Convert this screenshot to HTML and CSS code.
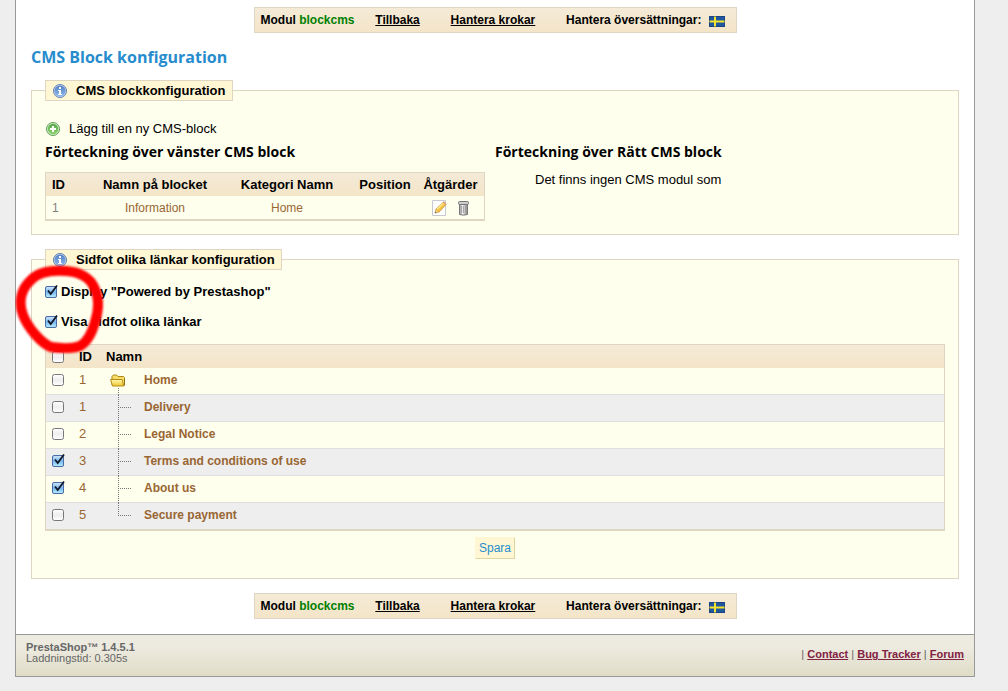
FILE: index.html
```html
<!DOCTYPE html>
<html lang="sv">
<head>
    <meta charset="UTF-8">
    <meta name="viewport" content="width=device-width, initial-scale=1.0">
    <title>PrestaShop - blockcms</title>
    <link rel="stylesheet" href="styles.css">
</head>
<body>
    <!-- Shared icons -->
    <svg class="sprite" aria-hidden="true">
        <defs>
            <linearGradient id="blue" x1="0" y1="0" x2="0" y2="1">
                <stop offset="0" stop-color="#5580c4"/>
                <stop offset="1" stop-color="#8cb8ea"/>
            </linearGradient>
            <linearGradient id="green" x1="0" y1="0" x2="0" y2="1">
                <stop offset="0" stop-color="#54a84c"/>
                <stop offset="1" stop-color="#8fd46c"/>
            </linearGradient>
            <linearGradient id="yellow" x1="0" y1="0" x2="0" y2="1">
                <stop offset="0" stop-color="#fffbb0"/>
                <stop offset="1" stop-color="#f0c52c"/>
            </linearGradient>
            <linearGradient id="metal">
                <stop offset="0" stop-color="#999"/>
                <stop offset=".4" stop-color="#eee"/>
                <stop offset="1" stop-color="#888"/>
            </linearGradient>
        </defs>
        <symbol id="icon-info" viewBox="0 0 16 16">
            <circle cx="8" cy="8" r="6.5" fill="#d5e1f2" stroke="#5d7fb5"/>
            <circle cx="8" cy="8" r="5.6" fill="url(#blue)"/>
            <path d="M7 4h2v2H7zM6 7h3v4h1v1H6v-1h1V8H6z" fill="#fff"/>
        </symbol>
        <symbol id="icon-add" viewBox="0 0 16 16">
            <circle cx="8" cy="8" r="6.5" fill="#d4edcb" stroke="#5d9f55"/>
            <circle cx="8" cy="8" r="5.2" fill="url(#green)"/>
            <path d="M7 5h2v2h2v2H9v2H7V9H5V7h2z" fill="#fff"/>
        </symbol>
        <symbol id="icon-edit" viewBox="0 0 16 16">
            <path d="M1.5 .5h13v15h-13z" fill="#fff" stroke="#c6c9d2"/>
            <path d="M4 13l1-4 7.500-7 2.500 2.500L8 12z" fill="#f7c545" stroke="#c28a30" stroke-width=".8"/>
            <path d="M6 9l6-5.500" stroke="#ffeb9a" stroke-width="1.300"/>
            <path d="M12 2.200l1-1 2.500 2.500-1 1z" fill="#dca089"/>
            <path d="M4 13l.8-3 2.200 2.200z" fill="#eed7a9"/>
            <path d="M4 13l.4-1.500 1.100 1.100z" fill="#333"/>
        </symbol>
        <symbol id="icon-delete" viewBox="0 0 16 16">
            <path d="M4.500 4h8v10.500q-4 1.300-8 0z" fill="url(#metal)" stroke="#777"/>
            <path d="M6.500 6v7M8.500 6v7M10.500 6v7" stroke="#999" stroke-width=".8"/>
            <rect x="3.500" y="1.500" width="10" height="3" rx="1" fill="#ccc" stroke="#777"/>
        </symbol>
        <symbol id="icon-flag" viewBox="0 0 16 11">
            <path d="M0 0h16v11H0z" fill="#21579c"/>
            <path d="M5 0h2v11H5zM0 4.500h16v2H0z" fill="#f5e52f"/>
            <path d="M.5 .5h15v10H.5z" fill="none" stroke="#143467" stroke-opacity=".5"/>
        </symbol>
        <symbol id="icon-folder" viewBox="0 0 16 13">
            <path d="M2 11V2.500L3.500 1h3L8 2.500h5.500l1 1V11z" fill="#f7dc67" stroke="#ad8513"/>
            <path d="M.6 5.500h11.500l1.500 6.500H2.500z" fill="url(#yellow)" stroke="#b58b16"/>
            <path d="M14.500 5v6.500" stroke="#8f6c10"/>
        </symbol>
        <symbol id="branch" viewBox="0 0 26 27">
            <path d="M12.500 0v27M14 12.500h12" fill="none" stroke="#777" stroke-dasharray="1 1"/>
        </symbol>
        <symbol id="branch-last" viewBox="0 0 26 27">
            <path d="M12.500 0v13M14 12.500h12" fill="none" stroke="#777" stroke-dasharray="1 1"/>
        </symbol>
    </svg>

    <div id="container">
        <div id="content">
            <nav class="toolbar">
                <span>Modul <span class="module">blockcms</span></span>
                <a href="#">Tillbaka</a>
                <a href="#">Hantera krokar</a>
                <span class="languages">Hantera översättningar:
                    <a href="#" aria-label="Svenska"><svg class="flag"><use href="#icon-flag"/></svg></a>
                </span>
            </nav>

            <h2>CMS Block konfiguration</h2>

            <fieldset class="blocks">
                <legend><svg class="icon"><use href="#icon-info"/></svg>CMS blockkonfiguration</legend>
                <a class="add" href="#"><svg class="icon"><use href="#icon-add"/></svg>Lägg till en ny CMS-block</a>
                <div class="columns">
                    <div>
                        <h3>Förteckning över vänster CMS block</h3>
                        <table class="table block-table">
                            <thead>
                                <tr>
                                    <th class="id">ID</th>
                                    <th class="wide">Namn på blocket</th>
                                    <th class="wide">Kategori Namn</th>
                                    <th class="position">Position</th>
                                    <th class="actions">Åtgärder</th>
                                </tr>
                            </thead>
                            <tbody>
                                <tr>
                                    <td class="id">1</td>
                                    <td>Information</td>
                                    <td>Home</td>
                                    <td></td>
                                    <td>
                                        <div class="buttons">
                                            <a href="#" aria-label="Redigera"><svg class="icon"><use href="#icon-edit"/></svg></a>
                                            <a href="#" aria-label="Radera"><svg class="icon"><use href="#icon-delete"/></svg></a>
                                        </div>
                                    </td>
                                </tr>
                            </tbody>
                        </table>
                    </div>
                    <div>
                        <h3>Förteckning över Rätt CMS block</h3>
                        <p class="empty">Det finns ingen CMS modul som</p>
                    </div>
                </div>
            </fieldset>

            <fieldset class="footer-links">
                <legend><svg class="icon"><use href="#icon-info"/></svg>Sidfot olika länkar konfiguration</legend>
                <div class="options">
                    <label><input type="checkbox" checked>Display "Powered by Prestashop"</label>
                    <label><input type="checkbox" checked>Visa sidfot olika länkar</label>
                    <svg class="marker" viewBox="0 0 100 100" aria-hidden="true">
                        <path d="M22 24C30 15 43 14 57 15C71 16 81 22 85 31C90 41 90 54 86 66C83 77 78 86 71 90C63 93 49 92 42 91C32 87 19 72 14 59C9 46 12 33 22 24Z"/>
                    </svg>
                </div>
                <table class="table page-table">
                    <thead>
                        <tr>
                            <th class="check"><input type="checkbox" aria-label="Markera alla"></th>
                            <th class="id">ID</th>
                            <th>Namn</th>
                        </tr>
                    </thead>
                    <tbody>
                        <tr>
                            <td><input type="checkbox" id="cat1"></td>
                            <td>1</td>
                            <td><label class="page" for="cat1"><svg class="tree" viewBox="0 0 26 27"><use href="#icon-folder" x="4" y="6" width="16" height="13"/><path d="M12.500 20v7" stroke="#777" stroke-dasharray="1 1"/></svg>Home</label></td>
                        </tr>
                        <tr>
                            <td><input type="checkbox" id="page1"></td>
                            <td>1</td>
                            <td><label class="page" for="page1"><svg class="tree"><use href="#branch"/></svg>Delivery</label></td>
                        </tr>
                        <tr>
                            <td><input type="checkbox" id="page2"></td>
                            <td>2</td>
                            <td><label class="page" for="page2"><svg class="tree"><use href="#branch"/></svg>Legal Notice</label></td>
                        </tr>
                        <tr>
                            <td><input type="checkbox" id="page3" checked></td>
                            <td>3</td>
                            <td><label class="page" for="page3"><svg class="tree"><use href="#branch"/></svg>Terms and conditions of use</label></td>
                        </tr>
                        <tr>
                            <td><input type="checkbox" id="page4" checked></td>
                            <td>4</td>
                            <td><label class="page" for="page4"><svg class="tree"><use href="#branch"/></svg>About us</label></td>
                        </tr>
                        <tr>
                            <td><input type="checkbox" id="page5"></td>
                            <td>5</td>
                            <td><label class="page" for="page5"><svg class="tree"><use href="#branch-last"/></svg>Secure payment</label></td>
                        </tr>
                    </tbody>
                </table>
                <button class="save" type="submit">Spara</button>
            </fieldset>

            <nav class="toolbar">
                <span>Modul <span class="module">blockcms</span></span>
                <a href="#">Tillbaka</a>
                <a href="#">Hantera krokar</a>
                <span class="languages">Hantera översättningar:
                    <a href="#" aria-label="Svenska"><svg class="flag"><use href="#icon-flag"/></svg></a>
                </span>
            </nav>
        </div>

        <footer>
            <div class="version"><strong>PrestaShop™ 1.4.5.1</strong><br>Laddningstid: 0.305s</div>
            <div class="links">| <a href="#">Contact</a> | <a href="#">Bug Tracker</a> | <a href="#">Forum</a></div>
        </footer>
    </div>
</body>
</html>
```
FILE: styles.css
```css
* {
    box-sizing: border-box;
}
body {
    margin: 0 33px 15px 15px;
    background: #eee;
    color: #000;
    font-family: Arial, "Liberation Sans", sans-serif;
    font-size: 13px;
    line-height: 16px;
}
.sprite {
    position: absolute;
    width: 0;
    height: 0;
}
.icon {
    display: block;
    flex: none;
    width: 16px;
    height: 16px;
}
#container {
    background: #fff;
    border: 1px solid #999;
    border-top: 0;
}
#content {
    padding: 7px 15px 15px;
}

/* Module toolbar */
.toolbar {
    display: flex;
    justify-content: space-between;
    align-items: center;
    width: 483px;
    max-width: 100%;
    height: 26px;
    margin: 0 auto;
    padding: 0 10px 0 6px;
    border: 1px solid #dfd5c3;
    background: linear-gradient(#f4ead7, #f4e5c8);
    font-size: 12px;
    font-weight: bold;
}
.toolbar a {
    color: #000;
}
.toolbar > a {
    margin-right: 10px;
}
.toolbar .module {
    color: #008000;
}
.languages {
    display: flex;
    align-items: center;
    gap: 8px;
}
.flag {
    display: block;
    width: 16px;
    height: 11px;
    margin-top: 2px;
}

h2, h3 {
    font-family: "Trebuchet MS", "Open Sans", sans-serif;
}
h2 {
    margin: 14px 0 13px;
    color: #268ccd;
    font-size: 16px;
    line-height: 20px;
}
h3 {
    margin: 0 0 10px;
    font-size: 14px;
    line-height: 20px;
}

/* Fieldsets */
fieldset {
    margin: 0 0 14px;
    padding: 0 13px 14px;
    border: 1px solid #dfd5c3;
    background: #ffffee;
    min-width: 0;
}
legend {
    display: flex;
    align-items: center;
    gap: 8px;
    height: 21px;
    padding: 0 6px;
    border: 1px solid #dfd5c3;
    background: #fff6d3;
    font-weight: bold;
}
.add {
    display: flex;
    align-items: center;
    gap: 8px;
    width: max-content;
    margin: 20px 0 5px;
    color: #000;
    text-decoration: none;
}
.columns {
    display: grid;
    grid-template-columns: 450px 1fr;
}
.empty {
    margin: 0 0 0 40px;
}

/* Tables */
.table {
    border: 1px solid #dfd5c3;
    border-bottom-width: 2px;
    border-spacing: 0;
    table-layout: fixed;
    color: #996633;
}
.table th {
    height: 23px;
    padding: 0 6px;
    color: #000;
}
.table thead {
    background: linear-gradient(#f4ead7, #f4e5c8);
}
.table td {
    padding: 0 6px;
}
.block-table {
    width: 440px;
    text-align: center;
    font-size: 12px;
}
.block-table th {
    padding: 0;
    font-size: 13px;
}
.block-table td {
    height: 23px;
}
.block-table .id {
    width: 43px;
    padding-left: 6px;
    text-align: left;
}
.block-table td.id {
    color: #7f7f7f;
}
.block-table .wide {
    width: 132px;
}
.block-table .position {
    width: 64px;
}
.buttons {
    display: flex;
    justify-content: center;
    gap: 8px;
}
.blocks {
    padding-bottom: 13px;
}
.page-table {
    width: 100%;
    text-align: left;
}
.page-table .check {
    width: 27px;
}
.page-table .id {
    width: 27px;
}
.page-table td {
    height: 27px;
    padding-bottom: 2px;
    border-bottom: 1px solid #dedede;
}
.page-table tbody tr:nth-child(even) {
    background: #eee;
}
.page-table tr:last-child td {
    height: 26px;
    border-bottom: 0;
}
.page {
    display: flex;
    align-items: center;
    gap: 12px;
    height: 24px;
    font-size: 12px;
    font-weight: bold;
}
.tree {
    flex: none;
    align-self: flex-start;
    width: 26px;
    height: 27px;
}

/* Checkboxes */
input[type="checkbox"] {
    appearance: none;
    display: block;
    flex: none;
    width: 14px;
    height: 16px;
    margin: 0;
    background: url("data:image/svg+xml,%3Csvg xmlns='http://www.w3.org/2000/svg' viewBox='0 0 14 16'%3E%3ClinearGradient id='a' x2='0' y2='1'%3E%3Cstop stop-color='%23fff'/%3E%3Cstop offset='.5' stop-color='%23eee'/%3E%3Cstop offset='1' stop-color='%23fff'/%3E%3C/linearGradient%3E%3Crect x='.5' y='2.5' width='11' height='11' rx='2' fill='url(%23a)' stroke='%23777'/%3E%3C/svg%3E") no-repeat;
}
input[type="checkbox"]:checked {
    background-image: url("data:image/svg+xml,%3Csvg xmlns='http://www.w3.org/2000/svg' viewBox='0 0 14 16'%3E%3ClinearGradient id='a' x2='0' y2='1'%3E%3Cstop stop-color='%23d5e8fa'/%3E%3Cstop offset='.5' stop-color='%2376b5ee'/%3E%3Cstop offset='1' stop-color='%23b8f0ff'/%3E%3C/linearGradient%3E%3Crect x='.5' y='2.5' width='11' height='11' rx='1.5' fill='url(%23a)' stroke='%234a6ba5'/%3E%3Cpath d='M3 6.500l2.700 3.500L12 1.500' fill='none' stroke='%23101828' stroke-width='1.800'/%3E%3C/svg%3E");
}
.options {
    position: relative;
    display: grid;
    justify-items: start;
    gap: 14px;
    margin: 14px 0;
}
.options label {
    display: flex;
    align-items: center;
    gap: 2px;
    font-weight: bold;
}
/* Red pen ring over the two options */
.marker {
    position: absolute;
    top: -28px;
    left: -36px;
    width: 100px;
    height: 100px;
    pointer-events: none;
    filter: blur(1px);
}
.marker path {
    fill: none;
    stroke: #f00;
    stroke-width: 10;
    stroke-linejoin: round;
}
.save {
    display: block;
    height: 22px;
    margin: 6px auto 5px;
    padding: 0 3px;
    border: 1px solid #fff6d3;
    border-right-color: #dfd5a3;
    border-bottom-color: #dfd5a3;
    background: #fff6d3;
    color: #268ccd;
    font-family: inherit;
    font-size: 12px;
}

footer {
    display: flex;
    justify-content: space-between;
    align-items: center;
    height: 42px;
    padding: 0 10px;
    border-top: 1px solid #999;
    background: linear-gradient(#edeae0 30%, #dfddc6);
    color: #666;
    font-size: 11px;
    line-height: 11px;
}
.version {
    margin-bottom: 6px;
}
.links {
    margin-bottom: 2px;
}
.links a {
    color: #812143;
    font-weight: bold;
}
```
